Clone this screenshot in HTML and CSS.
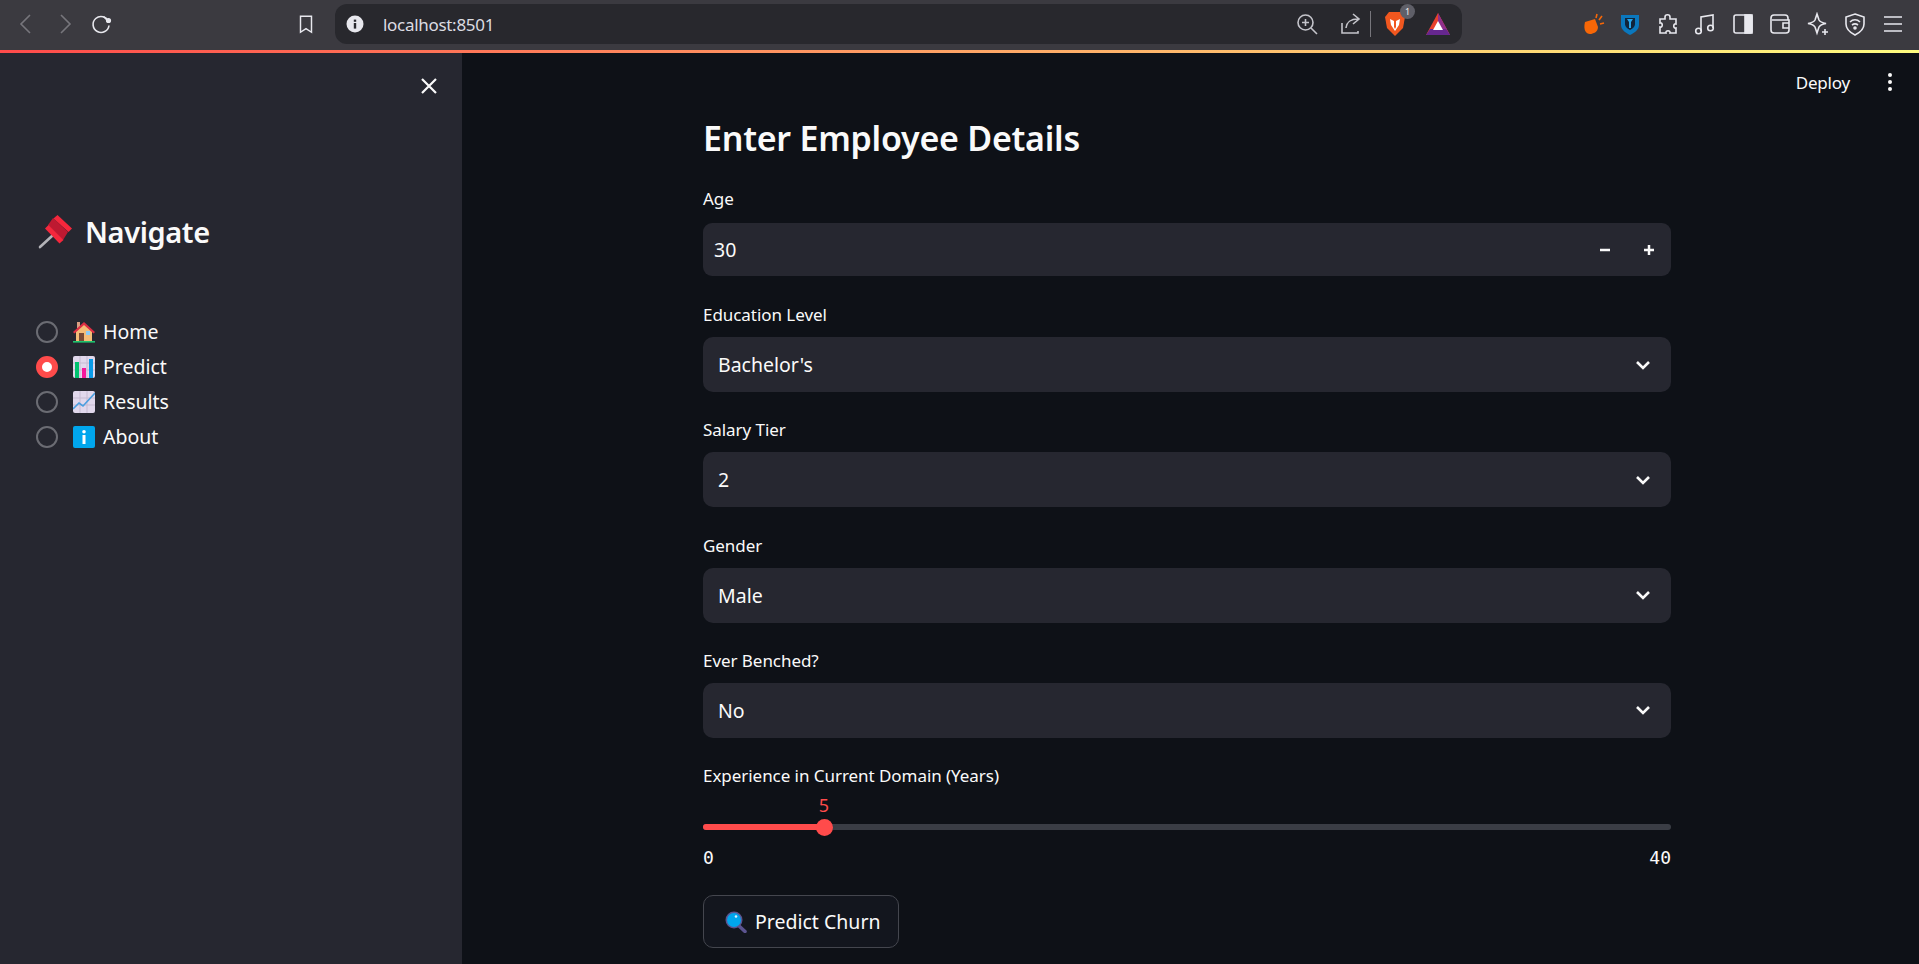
FILE: index.html
```html
<!DOCTYPE html>
<html lang="en">
<head>
    <meta charset="UTF-8">
    <title>localhost:8501</title>
    <link rel="stylesheet" href="styles.css">
</head>
<body>
    <!-- Browser chrome -->
    <div class="browser-bar">
        <div class="nav-icons">
            <svg class="slot dim" viewBox="0 0 24 24" width="24" height="24"><path d="M15 3 L6 12 L15 21" /></svg>
            <svg class="slot dim" viewBox="0 0 24 24" width="24" height="24"><path d="M9 3 L18 12 L9 21" /></svg>
            <svg class="slot" viewBox="0 0 24 24" width="24" height="24"><path d="M19.5 9.5 A8 8 0 1 0 20 13.5" /><path d="M14.5 4.5 L19.5 9.5" /><circle cx="19.5" cy="8.5" r="1.8" class="solid" /></svg>
        </div>
        <svg class="bookmark" viewBox="0 0 24 24" width="24" height="24"><path d="M6 3.5 H18 V21 L12 17 L6 21 Z" /></svg>
        <div class="address-bar">
            <svg class="info-icon" viewBox="0 0 18 18" width="18" height="18"><circle cx="9" cy="9" r="8.5" fill="#e8e8ee" /><rect x="7.8" y="8" width="2.4" height="5.6" fill="#2a2a2f" /><rect x="7.8" y="4.6" width="2.4" height="2.2" fill="#2a2a2f" /></svg>
            <span class="url">localhost:8501</span>
            <div class="address-actions">
                <svg class="addr-icon" viewBox="0 0 24 24" width="24" height="24"><circle cx="10.5" cy="10.5" r="7.5" /><path d="M16 16 L22 22 M10.5 7 V14 M7 10.5 H14" /></svg>
                <svg class="addr-icon" viewBox="0 0 24 24" width="24" height="24"><path d="M4 11 V21 H20 V19" /><path d="M8 16 C9 9 13 7 20 7 M15 2 L21 7 L15 12" /></svg>
                <span class="addr-sep"></span>
                <span class="brave">
                    <svg viewBox="0 0 22 26" width="22" height="26"><path d="M5 1 H17 L21 6 L19 17 L11 25 L3 17 L1 6 Z" fill="#f1571f" /><path d="M6 8 L10 10 V16 L11 18 L12 16 V10 L16 8 L15 14 L11 20 L7 14 Z" fill="#fff" /></svg>
                    <span class="badge">1</span>
                </span>
                <svg class="bat" viewBox="0 0 24 22" width="24" height="22"><path d="M12 0 L24 22 H0 Z" fill="#e8412c" /><path d="M12 0 L24 22 H16 L12 13 Z" fill="#8f2f8c" /><path d="M0 22 L4 16 H20 L24 22 Z" fill="#66278f" /><path d="M12 8 L17 17 H7 Z" fill="#fff" /></svg>
            </div>
        </div>
        <div class="ext-icons">
            <svg class="ext" viewBox="0 0 24 24" width="24" height="24"><path d="M4 10 L14 7 L17 15 C17 20 12 22 9 22 C5 22 2 18 4 10 Z" fill="#f76707" stroke="none" /><path d="M15 6 L16 2 M18 8 L21 4 M19 12 L23 11" stroke="#f76707" /></svg>
            <svg class="ext" viewBox="0 0 24 24" width="24" height="24"><path d="M3 3 H21 V13 C21 18 16 21 12 23 C8 21 3 18 3 13 Z" fill="#0a77bd" stroke="none" /><path d="M7 6 H17 V12 C17 15 14 17 12 18 C10 17 7 15 7 12 Z" fill="#10243a" stroke="none" /><path d="M9 7 H15 L13 10 V16 H11 V10 Z" fill="#2aa5e8" stroke="none" /></svg>
            <svg class="ext" viewBox="0 0 24 24" width="24" height="24"><path d="M9 5 C9 2 14 2 14 5 V7 H20 V12 C17 11 17 17 20 16 V21 H14 C15 18 9 18 10 21 H4 V15 C7 16 7 10 4 11 V7 H9 Z" /></svg>
            <svg class="ext" viewBox="0 0 24 24" width="24" height="24"><path d="M8 19 V5 L20 3 V16" /><circle cx="5.5" cy="19" r="2.8" /><circle cx="17.5" cy="16" r="2.8" /></svg>
            <svg class="ext" viewBox="0 0 24 24" width="24" height="24"><rect x="3" y="3" width="18" height="18" rx="2" /><rect x="14" y="3" width="7" height="18" fill="#e8e8ee" /></svg>
            <svg class="ext" viewBox="0 0 24 24" width="24" height="24"><path d="M20 8 V6 C20 4 19 3 17 3 H6 C4 3 3 4 3 6 V18 C3 20 4 21 6 21 H18 C20 21 21 20 21 18 V8 H4" /><path d="M21 11 H15 V16 H21" /></svg>
            <svg class="ext" viewBox="0 0 24 24" width="24" height="24"><path d="M11 2 L13 8 C14 10 15 10.5 20 11.5 C15 12.5 14 13 13 15 L11 21 L9 15 C8 13 7 12.5 2 11.5 C7 10.5 8 10 9 8 Z" /><path d="M19 17 V23 M16 20 H22" /></svg>
            <svg class="ext" viewBox="0 0 24 24" width="24" height="24"><path d="M12 2 L21 5 V12 C21 17 16 21 12 23 C8 21 3 17 3 12 V5 Z" /><path d="M7 10 C10 7 14 7 17 10 M9 13 C11 11.5 13 11.5 15 13" /><circle cx="12" cy="16" r="1" class="solid" /></svg>
            <svg class="ext" viewBox="0 0 24 24" width="24" height="24"><path d="M3 5 H21 M3 12 H21 M3 19 H21" /></svg>
        </div>
    </div>
    <div class="loading-line"></div>

    <div class="app">
        <aside class="sidebar">
            <div class="sidebar-close">
                <svg viewBox="0 0 18 18" width="18" height="18"><path d="M2 2 L16 16 M16 2 L2 16" /></svg>
            </div>
            <h2 class="sidebar-title">
                <svg viewBox="0 0 36 36" width="36" height="36"><path d="M3 32 L15 21" stroke="#b3b3b8" stroke-width="2.6" stroke-linecap="round" /><path d="M16 3 L31 17 L26 25 L11 10 Z" fill="#be1931" /><path d="M20.5 0 L35 13.5 L31.5 17 L16.5 3.5 Z" fill="#f4273c" /><path d="M8 13.5 L11.5 10 L26.5 25 L22.5 28.5 Z" fill="#f4273c" /></svg>
                Navigate
            </h2>
            <ul class="nav-list">
                <li class="nav-item">
                    <span class="radio"></span>
                    <svg class="emoji" viewBox="0 0 22 22" width="22" height="22"><rect x="4" y="1" width="3" height="6" fill="#d99e82" /><path d="M3 10 V20 H19 V10 L11 3 Z" fill="#f4bd77" /><path d="M0 11 L11 1 L22 11 L20.5 12.5 L11 4 L1.5 12.5 Z" fill="#dd2e44" /><rect x="6" y="12" width="5" height="8" fill="#7a4b34" /><rect x="13" y="10" width="4" height="4" fill="#8fccf2" /><rect x="0" y="20" width="22" height="1.6" fill="#1fc46e" /></svg>
                    <span>Home</span>
                </li>
                <li class="nav-item">
                    <span class="radio checked"></span>
                    <svg class="emoji" viewBox="0 0 22 22" width="22" height="22"><rect width="22" height="22" rx="2" fill="#e1d8ec" /><path d="M0 7 H22 M0 14 H22 M7 0 V22 M14 0 V22" stroke="#c6bbd2" /><rect x="2" y="6" width="4" height="16" fill="#00c16e" /><rect x="9" y="12" width="4" height="10" fill="#f5179b" /><rect x="16" y="3" width="4" height="19" fill="#0a9be8" /></svg>
                    <span>Predict</span>
                </li>
                <li class="nav-item">
                    <span class="radio"></span>
                    <svg class="emoji" viewBox="0 0 22 22" width="22" height="22"><rect width="22" height="22" rx="2" fill="#e1d8ec" /><path d="M0 7 H22 M0 14 H22 M7 0 V22 M14 0 V22" stroke="#c6bbd2" /><path d="M0 18 L6 12 L10 15 L22 2" fill="none" stroke="#4a9fe0" stroke-width="1.6" /></svg>
                    <span>Results</span>
                </li>
                <li class="nav-item">
                    <span class="radio"></span>
                    <svg class="emoji" viewBox="0 0 22 22" width="22" height="22"><rect width="22" height="22" rx="2" fill="#00a6ed" /><rect x="9.5" y="9" width="3" height="9" fill="#fff" /><circle cx="11" cy="5.8" r="1.8" fill="#fff" /></svg>
                    <span>About</span>
                </li>
            </ul>
        </aside>

        <main class="main">
            <div class="top-actions">
                <span class="deploy">Deploy</span>
                <span class="more-dots"><i></i><i></i><i></i></span>
            </div>
            <form class="form">
                <h1 class="page-title">Enter Employee Details</h1>

                <label class="field-label">Age</label>
                <div class="number-input">
                    <span>30</span>
                    <div class="steppers">
                        <svg viewBox="0 0 12 12" width="12" height="12"><path d="M1 6 H11" /></svg>
                        <svg viewBox="0 0 12 12" width="12" height="12"><path d="M1 6 H11 M6 1 V11" /></svg>
                    </div>
                </div>

                <label class="field-label">Education Level</label>
                <div class="select-box">
                    <span>Bachelor's</span>
                    <svg viewBox="0 0 16 10" width="16" height="10"><path d="M2 2 L8 8 L14 2" /></svg>
                </div>

                <label class="field-label">Salary Tier</label>
                <div class="select-box">
                    <span>2</span>
                    <svg viewBox="0 0 16 10" width="16" height="10"><path d="M2 2 L8 8 L14 2" /></svg>
                </div>

                <label class="field-label">Gender</label>
                <div class="select-box">
                    <span>Male</span>
                    <svg viewBox="0 0 16 10" width="16" height="10"><path d="M2 2 L8 8 L14 2" /></svg>
                </div>

                <label class="field-label">Ever Benched?</label>
                <div class="select-box">
                    <span>No</span>
                    <svg viewBox="0 0 16 10" width="16" height="10"><path d="M2 2 L8 8 L14 2" /></svg>
                </div>

                <label class="field-label">Experience in Current Domain (Years)</label>
                <div class="slider">
                    <div class="slider-value" style="width: 12.5%">5</div>
                    <div class="slider-track">
                        <div class="slider-fill" style="width: 12.5%"><span class="slider-thumb"></span></div>
                    </div>
                    <div class="slider-range"><span>0</span><span>40</span></div>
                </div>

                <button type="button" class="predict-btn">
                    <svg viewBox="0 0 22 22" width="22" height="22"><path d="M13 14 L20 20.5" stroke="#5c5490" stroke-width="3.5" stroke-linecap="round" /><circle cx="9" cy="9" r="8.5" fill="#5c5490" /><circle cx="9" cy="9" r="7" fill="#00a6ed" /><circle cx="11" cy="5.5" r="1.3" fill="#d8f3ff" /></svg>
                    Predict Churn
                </button>
            </form>
        </main>
    </div>
</body>
</html>
```

FILE: styles.css
```css
* {
    box-sizing: border-box;
}

html, body {
    height: 100%;
}

body {
    margin: 0;
    overflow: hidden;
    background-color: #0e1117;
    color: #fafafa;
    font-family: "Noto Sans", "Open Sans", sans-serif;
}

/* Browser chrome */
.browser-bar {
    display: flex;
    align-items: center;
    height: 50px;
    padding-bottom: 2px;
    background-color: #3b3a40;
}

.browser-bar svg {
    flex: none;
    fill: none;
    stroke: #e8e8ee;
    stroke-width: 1.6;
}

.browser-bar svg .solid {
    fill: #e8e8ee;
}

.nav-icons {
    display: flex;
    margin-left: 8px;
    width: 112px;
}

.nav-icons .slot {
    margin: 0 6.5px;
}

.nav-icons .dim {
    stroke: #77767c;
}

.browser-bar .bookmark {
    margin-left: 175px;
    width: 22px;
}

.address-bar {
    display: flex;
    align-items: center;
    width: 1127px;
    height: 40px;
    margin-left: 18px;
    padding-left: 11px;
    background-color: #28282d;
    border-radius: 12px;
}

.browser-bar .info-icon {
    stroke: none;
}

.url {
    margin-left: 19px;
    font-size: 17px;
    letter-spacing: -0.3px;
    color: #dcdce2;
}

.address-actions {
    display: flex;
    align-items: center;
    margin-left: auto;
    padding-right: 12px;
}

.browser-bar .addr-icon {
    margin-right: 19px;
    stroke: #c4c4ca;
}

.browser-bar .addr-icon + .addr-icon {
    margin-right: 8px;
}

.addr-sep {
    width: 1px;
    height: 26px;
    margin-right: 13px;
    background-color: #77767c;
}

.brave {
    position: relative;
    display: flex;
    margin-right: 20px;
}

.browser-bar .brave svg,
.browser-bar .bat {
    stroke: none;
}

.badge {
    position: absolute;
    top: -7px;
    right: -9px;
    width: 15px;
    height: 15px;
    border-radius: 50%;
    background-color: #5f5f68;
    font-size: 9px;
    line-height: 15px;
    text-align: center;
    color: #eee;
}

.ext-icons {
    display: flex;
    align-items: center;
    margin-left: 118.5px;
    gap: 13.5px;
}

.ext-icons .ext {
    width: 24px;
}

.loading-line {
    height: 3px;
    background: linear-gradient(90deg, #ff4b4b, #fffd80);
}

/* App */
.app {
    display: flex;
    height: 911px;
}

.sidebar {
    flex: none;
    width: 462px;
    padding: 24px 24px 0 36px;
    background-color: #262730;
}

.sidebar-close {
    display: flex;
    justify-content: flex-end;
    margin-bottom: 116px;
}

.sidebar-close svg {
    fill: none;
    stroke: #fafafa;
    stroke-width: 2.2;
}

.sidebar-title {
    display: flex;
    align-items: center;
    gap: 12px;
    height: 40px;
    margin: 0 0 63px 1px;
    font-size: 29px;
    font-weight: 600;
    letter-spacing: -0.4px;
}

.sidebar-title svg {
    margin-top: 3px;
}

.nav-list {
    list-style-type: none;
    margin: 0;
    padding: 0;
}

.nav-item {
    display: flex;
    align-items: center;
    height: 35px;
    font-size: 19.5px;
}

.radio {
    width: 22px;
    height: 22px;
    margin-right: 15px;
    border: 2px solid #6b6c73;
    border-radius: 50%;
}

.radio.checked {
    border: 6px solid #ff4b4b;
    background-color: #fff;
}

.emoji {
    margin-right: 8px;
}

.main {
    flex: 1;
    min-width: 0;
}

.top-actions {
    display: flex;
    align-items: center;
    justify-content: flex-end;
    height: 58px;
    padding-right: 27px;
}

.deploy {
    margin-right: 38px;
    font-size: 17px;
    letter-spacing: -0.2px;
}

.more-dots {
    display: flex;
    flex-direction: column;
    gap: 3px;
}

.more-dots i {
    width: 4px;
    height: 4px;
    border-radius: 50%;
    background-color: #fafafa;
}

.form {
    width: 968px;
    margin-left: 241px;
}

.page-title {
    margin: 0 0 22px;
    height: 54px;
    font-size: 34px;
    line-height: 54px;
    font-weight: 600;
    letter-spacing: -0.25px;
}

.field-label {
    display: block;
    height: 24px;
    margin-bottom: 10px;
    font-size: 17px;
    line-height: 24px;
    letter-spacing: -0.05px;
}

.number-input,
.select-box {
    display: flex;
    align-items: center;
    justify-content: space-between;
    background-color: #262730;
    font-size: 19.5px;
}

.number-input {
    height: 53px;
    margin-top: 12px;
    margin-bottom: 27px;
    padding: 0 16px 0 11px;
    border-radius: 9px;
}

.steppers {
    display: flex;
    gap: 32px;
}

.steppers svg {
    fill: none;
    stroke: #fafafa;
    stroke-width: 2.5;
}

.select-box {
    height: 55px;
    margin-bottom: 26.3px;
    padding: 0 20px 0 15px;
    border-radius: 10px;
}

.select-box svg {
    fill: none;
    stroke: #fafafa;
    stroke-width: 2.6;
}

.slider {
    margin-top: -6px;
    margin-bottom: 27px;
}

.slider-value {
    height: 32px;
    text-align: right;
    font-size: 18px;
    line-height: 26px;
    color: #ff4b4b;
    transform: translateX(5px);
}

.slider-track {
    height: 6px;
    background-color: #3a3d45;
    border-radius: 3px;
}

.slider-fill {
    display: flex;
    align-items: center;
    justify-content: flex-end;
    height: 6px;
    background-color: #ff4b4b;
    border-radius: 3px;
}

.slider-thumb {
    flex: none;
    width: 17px;
    height: 17px;
    margin-right: -9px;
    background-color: #ff4b4b;
    border-radius: 50%;
}

.slider-range {
    display: flex;
    justify-content: space-between;
    margin-top: 18px;
    font-family: "DejaVu Sans Mono", monospace;
    font-size: 18px;
    line-height: 20px;
}

.predict-btn {
    display: flex;
    align-items: center;
    gap: 8px;
    width: 196px;
    height: 53px;
    padding: 0 0 0 21px;
    background-color: #13161e;
    border: 1px solid #44464e;
    border-radius: 10px;
    color: #fafafa;
    font-family: inherit;
    font-size: 19.5px;
}
```
